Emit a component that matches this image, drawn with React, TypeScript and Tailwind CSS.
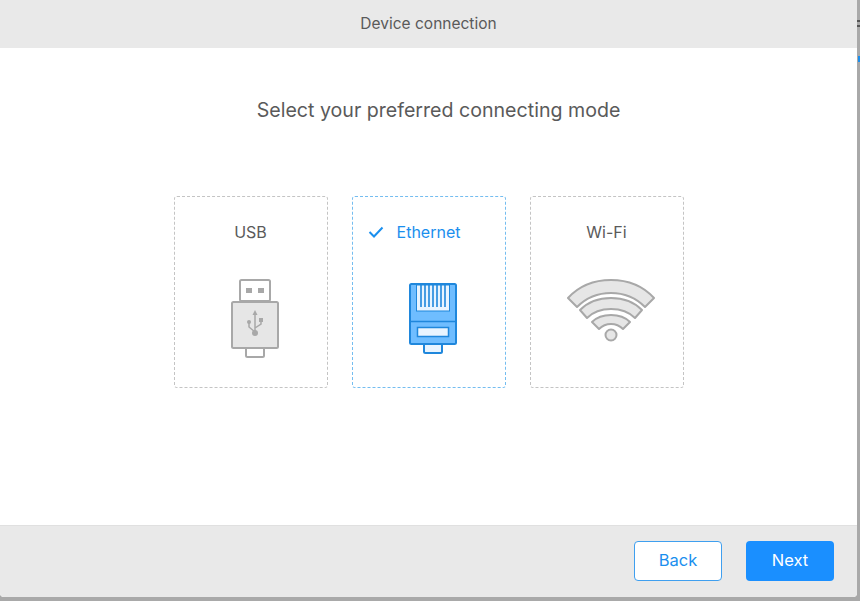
const font = "font-['Inter','Noto_Sans',sans-serif]";

const UsbIcon = () => (
  <svg width="48" height="80" viewBox="0 0 48 80" className="block">
    <rect x="9" y="1" width="30" height="21" rx="1.5" fill="#fff" stroke="#a8a8a8" strokeWidth="2" />
    <rect x="15" y="9" width="6" height="5" fill="#a8a8a8" />
    <rect x="27" y="9" width="6" height="5" fill="#a8a8a8" />
    <rect x="15" y="68" width="18" height="10" rx="1.5" fill="#fff" stroke="#a8a8a8" strokeWidth="2" />
    <rect x="1" y="23" width="46" height="46" rx="1.5" fill="#e6e6e6" stroke="#a8a8a8" strokeWidth="2" />
    <path d="M24 34v21M24 53l-6-5v-4M24 49l6-4v-3" fill="none" stroke="#a8a8a8" strokeWidth="1.5" />
    <path d="M24 31l-2.5 5h5z" fill="#a8a8a8" />
    <circle cx="24" cy="54" r="3" fill="#a8a8a8" />
    <circle cx="18" cy="43" r="2" fill="#a8a8a8" />
    <rect x="28" y="39" width="4" height="4" fill="#a8a8a8" />
  </svg>
);

const EthernetIcon = () => (
  <svg width="48" height="72" viewBox="0 0 48 72" className="block">
    <rect x="15" y="60" width="18" height="10" rx="1.5" fill="#e8f4ff" stroke="#1f87dc" strokeWidth="2" />
    <rect x="1" y="1" width="46" height="60" rx="1.5" fill="#6fbdff" stroke="#1f87dc" strokeWidth="2" />
    <rect x="7.5" y="2" width="33" height="26" fill="#e8f4ff" stroke="#1f87dc" strokeWidth="1" />
    <path d="M12 2v22M16 2v22M20 2v22M24 2v22M28 2v22M32 2v22M36 2v22" stroke="#1f87dc" strokeWidth="1.6" />
    <path d="M1 38.5h46" stroke="#1f87dc" strokeWidth="1.5" />
    <rect x="8.5" y="44.5" width="31" height="9" fill="#e8f4ff" stroke="#1f87dc" strokeWidth="1.5" />
  </svg>
);

const WifiIcon = () => (
  <svg width="88" height="64" viewBox="0 0 88 64" className="mb-4 block">
    <g fill="#e6e6e6" stroke="#a8a8a8" strokeWidth="2" strokeLinejoin="round">
      <path d="M1 19C12 7 27 1 44 1s32 6 43 18l-9 9C69 19 57 14 44 14S19 19 10 28z" />
      <path d="M13 31c8-8 19-12 31-12s23 4 31 12l-7 8c-6-6-15-9-24-9s-18 3-24 9z" />
      <path d="M25 43c5-5 12-7 19-7s14 2 19 7l-7 7c-3-3-7-5-12-5s-9 2-12 5z" />
      <circle cx="44" cy="56" r="5.5" />
    </g>
  </svg>
);

const cards = [
  { name: "USB", icon: <UsbIcon />, active: false },
  { name: "Ethernet", icon: <EthernetIcon />, active: true },
  { name: "Wi-Fi", icon: <WifiIcon />, active: false },
];

export default function App() {
  return (
    <div className={`relative h-[601px] w-[860px] overflow-hidden bg-[#a9a9a9] ${font}`}>
      <div className="flex h-[597px] w-[857px] flex-col overflow-hidden rounded-b-[4px] bg-white">
        <div className="flex h-12 shrink-0 items-center justify-center bg-[#e9e9e9] text-[15.5px] text-[#5a5a5a]">
          Device connection
        </div>
        <div className="flex flex-1 flex-col items-center pl-5">
          <h1 className="mt-[49px] text-[19.6px] leading-[26px] text-[#5a5a5a]">
            Select your preferred connecting mode
          </h1>
          <div className="mt-[73px] mr-5 flex gap-6">
            {cards.map((card) => (
              <div
                key={card.name}
                className={`relative flex h-[192px] w-[154px] flex-col items-center rounded-[3px] border border-dashed ${
                  card.active ? "border-[#74bdf0]" : "border-[#c4c4c4]"
                }`}
              >
                <div
                  className={`mt-[25px] flex h-5 items-center text-base ${
                    card.active ? "text-[#1a8fee]" : "text-[#5a5a5a]"
                  }`}
                >
                  {card.name}
                </div>
                {card.active && (
                  <svg width="16" height="12" viewBox="0 0 16 12" className="absolute top-[29px] left-[15px]">
                    <path d="M1.5 6l4.5 4.5L14.5 1.5" fill="none" stroke="#1a8fee" strokeWidth="2" />
                  </svg>
                )}
                <div className="mt-px ml-2 flex h-[112px] items-center pt-[39px]">{card.icon}</div>
              </div>
            ))}
          </div>
        </div>
        <div className="flex h-[72px] shrink-0 items-center justify-end gap-6 border-t border-[#e0e0e0] bg-[#e9e9e9] pr-[23px] pb-0.5">
          <button className="h-10 w-[88px] rounded-[4px] border border-[#3f9fef] bg-white text-[16.5px] text-[#1a8fee]">
            Back
          </button>
          <button className="h-10 w-[88px] rounded-[4px] bg-[#1a8fff] text-[16.5px] text-white">Next</button>
        </div>
      </div>
      {/* bits of the page behind the window */}
      <div className="absolute top-5 right-0 h-0.5 w-[3px] bg-[#555]" />
      <div className="absolute top-[25px] right-0 h-0.5 w-[3px] bg-[#555]" />
      <div className="absolute top-[56px] right-0 h-1.5 w-[2px] bg-[#1a8fee]" />
    </div>
  );
}
